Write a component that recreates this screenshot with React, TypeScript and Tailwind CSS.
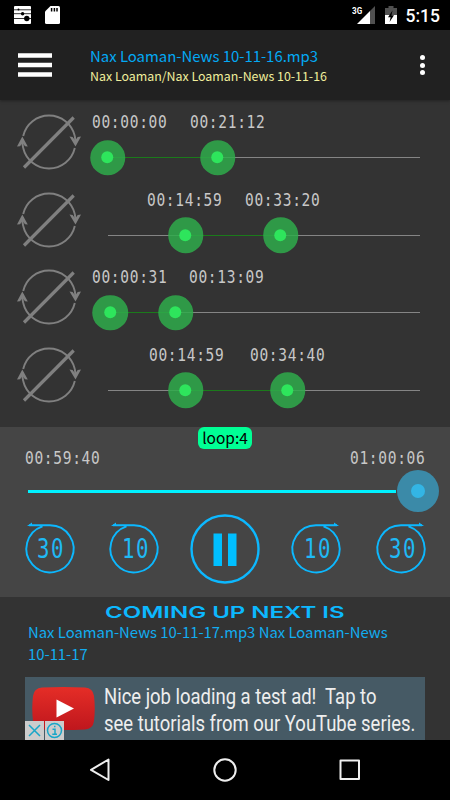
import type { ReactNode } from "react";

const SANS = "font-['Noto_Sans_CJK_SC','Noto_Sans',sans-serif]";
const MONO = "font-['DejaVu_Sans_Mono',monospace]";

interface Loop {
  a: { label: string; labelX: number; x: number };
  b: { label: string; labelX: number; x: number };
}

// positions are measured from the left end of the loop track
const LOOPS: Loop[] = [
  { a: { label: "00:00:00", labelX: -15.5, x: 0 },    b: { label: "00:21:12", labelX: 82, x: 110 } },
  { a: { label: "00:14:59", labelX: 39.5, x: 78 },    b: { label: "00:33:20", labelX: 137, x: 173 } },
  { a: { label: "00:00:31", labelX: -16, x: 2.5 },    b: { label: "00:13:09", labelX: 81.5, x: 68 } },
  { a: { label: "00:14:59", labelX: 41, x: 78 },      b: { label: "00:34:40", labelX: 142.5, x: 180 } },
];

function Time({ children }: { children: string }) {
  return (
    <span className={`block w-[76px] h-5 shrink-0 ${MONO} text-[17.5px] leading-5 text-[#c8c8c8]`}>
      <span className="inline-block origin-left scale-x-[0.83] whitespace-nowrap tracking-[0.82px]">{children}</span>
    </span>
  );
}

function StatusBar() {
  return (
    <div className="flex h-[30px] shrink-0 items-center bg-black pl-[14px] pr-[10px] text-white">
      <svg className="h-[18px] w-[17px]" viewBox="0 0 17 18">
        <rect width="17" height="18" rx="1" fill="#fff" />
        <path d="M0 3.8h17M0 7.7h17M0 12.5h17" stroke="#000" strokeWidth="0.8" />
        <circle cx="4.5" cy="3.6" r="1" />
        <circle cx="8.6" cy="7.7" r="1.7" />
        <circle cx="12.8" cy="12.5" r="2.7" />
      </svg>
      <svg className="ml-[14px] h-[18px] w-[15px]" viewBox="0 0 15 18">
        <path d="M5.5 0H13.5Q15 0 15 1.5V16.5Q15 18 13.5 18H1.5Q0 18 0 16.5V5.5Z" fill="#fff" />
        <path d="M6.6 2v3.4M9.4 2v3.4M12 2v3.4" stroke="#000" strokeWidth="1.5" />
      </svg>
      <div className="ml-auto flex items-center">
        <span className="w-[5px] self-start font-['Roboto',sans-serif] text-[9.5px] font-bold leading-[12px]">
          <span className="inline-block origin-left scale-x-[0.85]">3G</span>
        </span>
        <svg className="h-[18px] w-[18px]" viewBox="0 0 18 18">
          <path d="M18 0V18H13V5Z" fill="#505050" />
          <path d="M13 5V18H0Z" fill="#fff" />
        </svg>
        <svg className="ml-[10px] h-[18px] w-3" viewBox="0 0 12 18">
          <path d="M3.5 0h5v2H12v7H0V2h3.5z" fill="#505050" />
          <path d="M0 9h12v9H0z" fill="#fff" />
          <path d="M7.5 4.5 3 11.2h2.6L4.6 16 9 9.2H6.5z" fill="#000" />
        </svg>
        <span className="ml-[9px] mt-px font-['Roboto',sans-serif] text-[17.5px] font-medium leading-5">5:15</span>
      </div>
    </div>
  );
}

function AppBar() {
  return (
    <header className="relative flex h-[70px] shrink-0 items-center bg-[#212121] shadow-[0_1px_3px_rgba(0,0,0,0.35)]">
      <svg className="ml-[18px] h-6 w-[34px]" viewBox="0 0 34 24">
        <path d="M0 2.5h34M0 12h34M0 21.5h34" stroke="#fff" strokeWidth="4.6" />
      </svg>
      <div className={`ml-[38px] flex flex-col whitespace-nowrap ${SANS}`}>
        <span className="text-[14.9px] leading-[21px] text-[#03a9f4]">Nax Loaman-News 10-11-16.mp3</span>
        <span className="text-[12.4px] leading-[20px] text-[#f0ee9c]">Nax Loaman/Nax Loaman-News 10-11-16</span>
      </div>
      <div className="ml-auto mr-[25px] flex flex-col gap-[2.5px]">
        <span className="size-[5px] rounded-full bg-white" />
        <span className="size-[5px] rounded-full bg-white" />
        <span className="size-[5px] rounded-full bg-white" />
      </div>
    </header>
  );
}

function LoopOffIcon() {
  return (
    <svg className="mt-[13px] h-[58px] w-[66px] shrink-0" viewBox="0 0 66 58" fill="none" stroke="#808080">
      <path d="M7.2 23A26.5 26.5 0 0 1 58.8 23" strokeWidth="1.9" />
      <path d="M58.8 35A26.5 26.5 0 0 1 7.2 35" strokeWidth="1.9" />
      <path d="M8 54.5 57.7 4.500" strokeWidth="3.2" />
      <path d="M6.300 23.500 11.800 33.600 9 33.200 6.600 30 4 33.200 1 33.600Z" fill="#808080" stroke="none" />
      <path d="M59.500 33.600 53.500 23.500 56.600 24 59.200 27.500 61.700 24 65 23.500Z" fill="#808080" stroke="none" />
      <path d="M6.600 26V32L7.200 35M59.200 31V26L58.800 23" strokeWidth="1.9" />
    </svg>
  );
}

function Thumb({ x }: { x: number }) {
  return (
    <span
      className="absolute top-1/2 flex size-[35.5px] -translate-x-1/2 -translate-y-1/2 items-center justify-center rounded-full bg-[#2fab4b]/85"
      style={{ left: x }}
    >
      <span className="size-[12px] rounded-full bg-[#2ee55c]" />
    </span>
  );
}

function LoopRow({ a, b }: Loop) {
  return (
    <div className="flex h-[77.5px] shrink-0 pl-4">
      <LoopOffIcon />
      <div className="ml-[25.5px] w-[312.5px] pt-[12px]">
        <div className="flex">
          <div style={{ marginLeft: a.labelX }}><Time>{a.label}</Time></div>
          <div style={{ marginLeft: b.labelX - a.labelX - 76 }}><Time>{b.label}</Time></div>
        </div>
        <div className="relative mt-[25px] h-px bg-[#858585]">
          <div className="h-px bg-[#1b7a1b]" style={{ marginLeft: a.x, width: b.x - a.x }} />
          <Thumb x={a.x} />
          <Thumb x={b.x} />
        </div>
      </div>
    </div>
  );
}

function SkipButton({ seconds, forward }: { seconds: string; forward?: boolean }) {
  return (
    <button className="relative flex h-[52px] w-[50px] items-center justify-center">
      <svg
        className={`absolute inset-0 h-[52px] w-[50px] overflow-visible ${forward ? "-scale-x-100" : ""}`}
        viewBox="0 0 50 52"
        fill="none"
        stroke="#0cb8ff"
        strokeWidth="1.9"
      >
        <path d="M4 2.2H25A23.6 23.6 0 1 1 17.5 3.42" />
        <path d="M2 3.100 7 -.5V3.100Z" fill="#0cb8ff" stroke="none" />
      </svg>
      <span className={`block w-[25px] ${MONO} text-[26.5px] leading-[30px] text-[#1fb9f5]`}>
        <span className="inline-block origin-left scale-x-[0.78] tracking-[2px]">{seconds}</span>
      </span>
    </button>
  );
}

function Player() {
  return (
    <section className="mt-[17px] flex h-[170px] shrink-0 flex-col bg-[#454545]">
      <div className={`mx-auto h-[22px] w-[54px] whitespace-nowrap rounded-[6px] bg-[#00ff95] text-center text-[15.5px] leading-[20px] text-black ${SANS}`}>
        loop:4
      </div>
      <div className="-mt-px flex justify-between pl-[25px] pr-[24px]">
        <Time>00:59:40</Time>
        <Time>01:00:06</Time>
      </div>
      <div className="relative ml-[28px] mt-[21.5px] h-[3px] w-[368px] bg-[#00f2ff]">
        <span className="absolute left-[369px] top-1/2 flex size-[42px] -translate-y-1/2 items-center justify-center rounded-full bg-[#3b8aa8]">
          <span className="size-[14px] rounded-full bg-[#33b5e5]" />
        </span>
      </div>
      <div className="mt-[21px] flex items-center justify-between pl-[24.5px] pr-[24px]">
        <SkipButton seconds="30" />
        <SkipButton seconds="10" />
        <svg className="mx-[-4px] size-[70px]" viewBox="0 0 70 70">
          <circle cx="35" cy="35" r="33.5" fill="none" stroke="#0cb8ff" strokeWidth="2.4" />
          <path d="M23.5 19.5h8.5v32.5h-8.5zM38 19.5h8.5v32.5h-8.5z" fill="#00bfff" />
        </svg>
        <SkipButton seconds="10" forward />
        <SkipButton seconds="30" forward />
      </div>
    </section>
  );
}

function AdBadge({ children }: { children: ReactNode }) {
  return (
    <span className="flex size-[19px] items-center justify-center bg-[#cccccc]">
      <svg className="size-[17px]" viewBox="0 0 17 17" fill="none" stroke="#18a6c8" strokeWidth="1.5">
        {children}
      </svg>
    </span>
  );
}

function UpNext() {
  return (
    <section className="flex h-[143px] shrink-0 flex-col">
      <h2 className="mx-auto mt-[5px] h-5 w-[240px] whitespace-nowrap font-['Inter',sans-serif] text-[16px] font-semibold leading-5 text-[#0cb8ff]">
        <span className="inline-block origin-left scale-x-[1.5]">COMING UP NEXT IS</span>
      </h2>
      <p className={`-mt-px ml-[28px] w-[370px] text-[14.85px] leading-[21.5px] text-[#12adf0] ${SANS}`}>
        Nax Loaman-News 10-11-17.mp3 Nax Loaman-News
        <br />
        10-11-17
      </p>
      <div className="relative ml-[25px] mt-auto flex h-[63px] w-[400px] bg-[#465a65]">
        <svg className="ml-[6.5px] mt-[10px] h-[43px] w-[63px] shrink-0" viewBox="0 0 63 43">
          <defs>
            <linearGradient id="red" x2="0" y2="1">
              <stop stopColor="#e52d27" />
              <stop offset="1" stopColor="#bf171d" />
            </linearGradient>
          </defs>
          <path d="M10 .5Q31 -.5 53 .5Q61 1 62 9Q63.500 21 62 34Q61 42 53 42.500Q31 43.500 10 42.500Q2 42 1 34Q-.5 21 1 9Q2 1 10 .5Z" fill="url(#red)" />
          <path d="M24.500 12.500 42 21.500 24.500 30.500Z" fill="#fff" />
        </svg>
        <div className="ml-[9px] mt-[6px] w-[312px] shrink-0 whitespace-pre font-['Roboto',sans-serif] text-[21.5px] leading-[27px] text-[#eeeeee]">
          <div className="w-max origin-left scale-x-[0.858]">Nice job loading a test ad!  Tap to</div>
          <div className="w-max origin-left scale-x-[0.858]">see tutorials from our YouTube series.</div>
        </div>
        <div className="absolute bottom-0 left-0 flex gap-px">
          <AdBadge>
            <path d="M3 3 14 14M14 3 3 14" />
          </AdBadge>
          <AdBadge>
            <circle cx="8.500" cy="8.500" r="7" />
            <path d="M6.500 7.300H9V12M6.300 12.300H11M8 4.500H9.500" />
          </AdBadge>
        </div>
      </div>
    </section>
  );
}

function NavBar() {
  return (
    <nav className="flex h-[60px] shrink-0 items-center justify-between bg-black px-[88px]">
      <svg className="size-6" viewBox="0 0 24 24" fill="none" stroke="#eee" strokeWidth="2" strokeLinejoin="round">
        <path d="M20.500 1.500V22L3 11.800Z" />
      </svg>
      <svg className="size-6" viewBox="0 0 24 24" fill="none" stroke="#eee" strokeWidth="2">
        <circle cx="12" cy="12" r="10.700" />
      </svg>
      <svg className="size-6" viewBox="0 0 24 24" fill="none" stroke="#eee" strokeWidth="2" strokeLinejoin="round">
        <path d="M2.500 2.500h18.500v18.500h-18.500z" />
      </svg>
    </nav>
  );
}

export default function App() {
  return (
    <div className="flex h-[800px] w-[450px] flex-col overflow-hidden bg-[#333333]">
      <StatusBar />
      <AppBar />
      {LOOPS.map((loop, i) => (
        <LoopRow key={i} {...loop} />
      ))}
      <Player />
      <UpNext />
      <NavBar />
    </div>
  );
}
